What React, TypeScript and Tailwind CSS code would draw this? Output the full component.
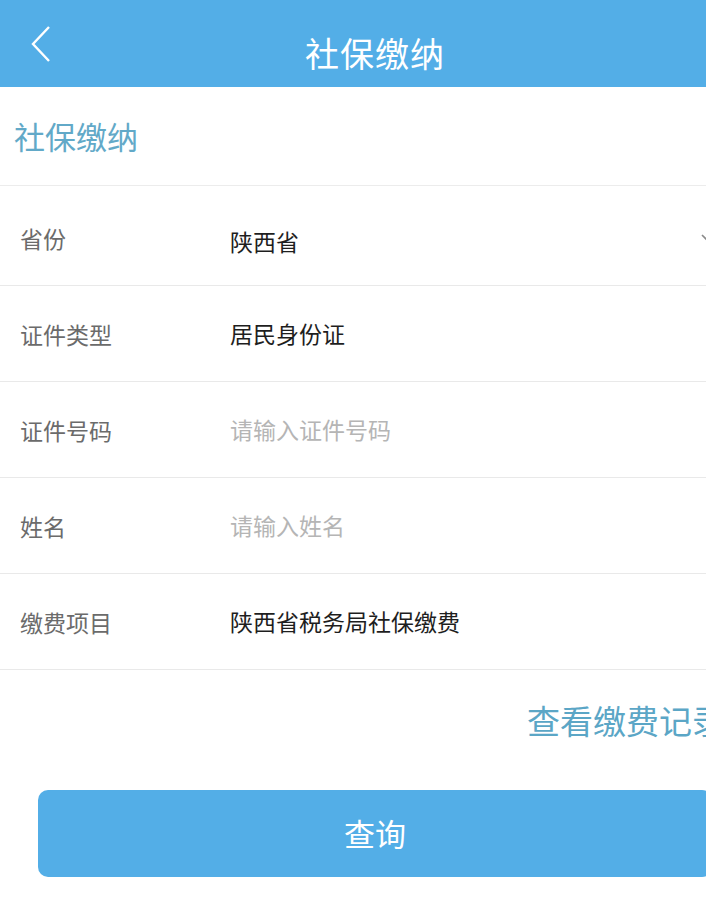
const font = "font-['Noto_Sans_CJK_SC',sans-serif]";

const rows = [
    { label: "省份", value: "陕西省", select: true },
    { label: "证件类型", value: "居民身份证" },
    { label: "证件号码", placeholder: "请输入证件号码" },
    { label: "姓名", placeholder: "请输入姓名" },
    { label: "缴费项目", value: "陕西省税务局社保缴费" },
];

function Row({
    label,
    value,
    placeholder,
    select = false,
    first = false,
}: {
    label: string;
    value?: string;
    placeholder?: string;
    select?: boolean;
    first?: boolean;
}) {
    return (
        <div
            className={`flex items-center border-b border-[#e9e9e9] ${
                first ? "h-[100px] pt-[12px]" : "h-[96px]"
            }`}
        >
            <div className={`w-[230px] pl-[20px] text-[23px] text-[#6b6b6b] ${first ? "-mt-[6px]" : "mt-[2px]"}`}>
                {label}
            </div>
            {value ? (
                <div className="flex-1 text-[23px] text-[#1e1e1e]">{value}</div>
            ) : (
                <div className="flex-1 text-[23px] text-[#b5b5b5]">{placeholder}</div>
            )}
            {select && (
                <svg width="16" height="16" viewBox="0 0 16 16" className="mr-[34px] -mt-[8px]">
                    <path d="M2 5 L8 11 L14 5" fill="none" stroke="#8a8a8a" strokeWidth="1.6" />
                </svg>
            )}
        </div>
    );
}

export default function App() {
    return (
        <div className={`w-[706px] h-[920px] overflow-hidden bg-white ${font}`}>
            <div className="w-[750px]">
                <header className="h-[87px] bg-[#53aee7] flex items-center relative">
                    <svg
                        width="24"
                        height="40"
                        viewBox="0 0 24 40"
                        className="absolute left-[29px] top-[25px]"
                    >
                        <path d="M20 2 L4 19 L20 36" fill="none" stroke="#ffffff" strokeWidth="2.4" />
                    </svg>
                    <h1 className="w-full text-center text-[34px] text-white pt-[18px] tracking-[1px]">
                        社保缴纳
                    </h1>
                </header>

                <div className="h-[99px] flex items-center border-b border-[#ececec] pl-[14px]">
                    <span className="text-[31px] text-[#62a9c8]">社保缴纳</span>
                </div>

                {rows.map((r, i) => (
                    <Row key={r.label} {...r} first={i === 0} />
                ))}

                <div className="flex justify-start pl-[527px] pt-[26px] h-[120px]">
                    <span className="text-[33px] text-[#5ba6c6] whitespace-nowrap">查看缴费记录</span>
                </div>

                <div className="px-[38px]">
                    <button className="w-full h-[87px] rounded-[10px] bg-[#53aee7] text-white text-[31px]">
                        查询
                    </button>
                </div>
            </div>
        </div>
    );
}
